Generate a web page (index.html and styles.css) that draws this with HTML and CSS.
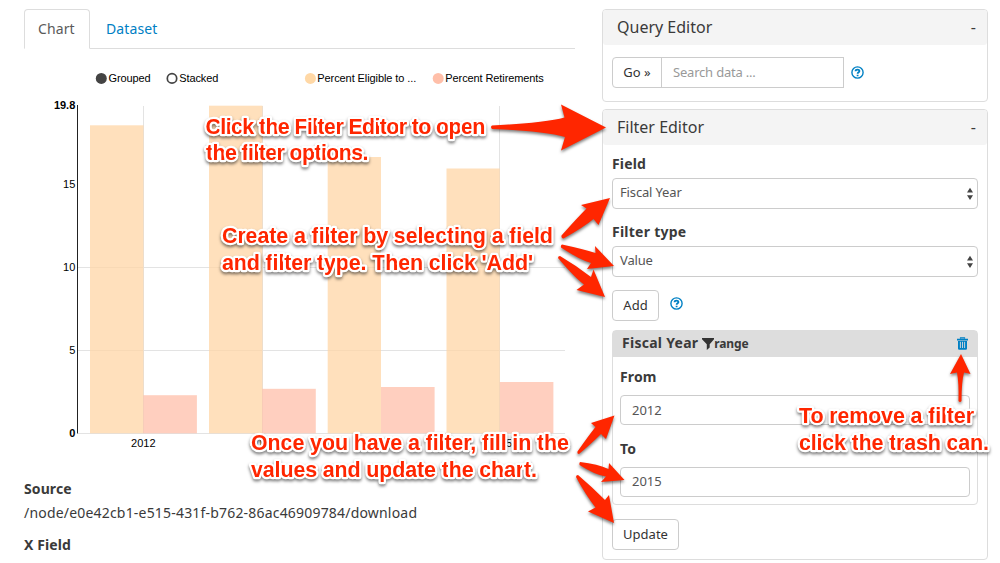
FILE: index.html
```html
<!DOCTYPE html>
<html lang="en">
<head>
<meta charset="utf-8">
<title>Chart preview</title>
<link rel="stylesheet" href="styles.css">
</head>
<body>
<div class="page">
  <main class="preview">
    <nav class="tabs"><a class="tab active">Chart</a><a class="tab">Dataset</a></nav>
    <svg class="chart" width="551" height="410" viewBox="24 49 551 410">
      <circle cx="101.3" cy="78.4" r="5.5" fill="#444"/>
      <text x="108.5" y="82" textLength="42">Grouped</text>
      <circle cx="172" cy="78.4" r="4.7" fill="#fff" stroke="#444" stroke-width="1.7"/>
      <text x="179.3" y="82" textLength="39">Stacked</text>
      <circle cx="310.4" cy="78.4" r="5.5" fill="#ffd8a6"/>
      <text x="317.3" y="82" textLength="99">Percent Eligible to ...</text>
      <circle cx="438.2" cy="78.4" r="5.5" fill="#ffbfa9"/>
      <text x="445.3" y="82" textLength="98.5">Percent Retirements</text>
      <path class="grid" d="M78 267.5H565M78 350.5H565M78 433.5H565M143.5 106V433M262.5 106V433M499.5 106V433"/>
      <g class="eligible">
        <rect x="90" y="125.3" width="53.5" height="308"/>
        <rect x="209" y="105.7" width="53.5" height="327.6"/>
        <rect x="327.7" y="157" width="53.3" height="276.3"/>
        <rect x="446.5" y="168.5" width="53.3" height="264.8"/>
      </g>
      <g class="retired">
        <rect x="143.3" y="395.2" width="53.6" height="38.1"/>
        <rect x="262.2" y="388.8" width="53.6" height="44.5"/>
        <rect x="381" y="387" width="53.6" height="46.3"/>
        <rect x="499.8" y="382" width="53.6" height="51.3"/>
      </g>
      <path d="M77.5 105V433.5" stroke="#222"/>
      <g text-anchor="end">
        <text class="strong" x="75.3" y="109">19.8</text>
        <text x="75.3" y="188">15</text>
        <text x="75.3" y="271">10</text>
        <text x="75.3" y="354">5</text>
        <text class="strong" x="75.3" y="437">0</text>
      </g>
      <g text-anchor="middle">
        <text x="143.3" y="447">2012</text>
        <text x="262.2" y="447">2013</text>
        <text x="381" y="447">2014</text>
        <text x="499.8" y="447">2015</text>
      </g>
    </svg>
    <dl class="meta">
      <dt>Source</dt>
      <dd>/node/e0e42cb1-e515-431f-b762-86ac46909784/download</dd>
      <dt>X Field</dt>
    </dl>
  </main>

  <aside class="sidebar">
    <section class="panel query">
      <h2 class="panel-head">Query Editor<span>-</span></h2>
      <div class="search">
        <button class="btn go">Go »</button><div class="search-input">Search data ...</div>
        <svg class="help" width="13" height="13" viewBox="0 0 13 13"><circle cx="6.5" cy="6.5" r="5.6"/><path d="M4.5 5.2C4.6 3 8.5 3.1 8.4 5.1C8.3 6.3 6.6 6.2 6.6 7.8M6.6 8.7V10.2"/></svg>
      </div>
    </section>
    <section class="panel filter">
      <h2 class="panel-head">Filter Editor<span>-</span></h2>
      <div class="panel-body">
        <div class="label first">Field</div>
        <div class="select">Fiscal Year<svg width="6" height="14" viewBox="0 0 6 14"><path d="M0 5.6L3 .8L6 5.6ZM0 8.2H6L3 13Z"/></svg></div>
        <div class="label second">Filter type</div>
        <div class="select">Value<svg width="6" height="14" viewBox="0 0 6 14"><path d="M0 5.6L3 .8L6 5.6ZM0 8.2H6L3 13Z"/></svg></div>
        <div class="add-row">
          <button class="btn add">Add</button>
          <svg class="help" width="13" height="13" viewBox="0 0 13 13"><circle cx="6.5" cy="6.5" r="5.6"/><path d="M4.5 5.2C4.6 3 8.5 3.1 8.4 5.1C8.3 6.3 6.6 6.2 6.6 7.8M6.6 8.7V10.2"/></svg>
        </div>
        <div class="rule">
          <div class="rule-head">
            <span class="rule-name">Fiscal Year</span>
            <svg class="funnel" width="12" height="12" viewBox="0 0 12 12"><path d="M0 0H12V1.2L7.7 6.2V9.4L4.8 12V6.2L0 1.2Z"/></svg>
            <span class="rule-kind">range</span>
            <svg class="trash" width="11" height="13" viewBox="0 0 11 13"><path d="M3.5 1.8V.8H7.5V1.8" fill="none" stroke="#0080c4" stroke-width="1.2"/><path d="M0 1.8H11V3.4H0ZM1 4H10V11.5Q10 12.7 8.800 12.7H2.2Q1 12.7 1 11.5Z" fill="#0080c4"/><path d="M3.4 4.8V11M5.5 4.8V11M7.6 4.8V11" stroke="#ddd" stroke-width=".9"/></svg>
          </div>
          <div class="rule-body">
            <div class="label">From</div>
            <div class="input">2012</div>
            <div class="label">To</div>
            <div class="input last">2015</div>
          </div>
        </div>
        <button class="btn update">Update</button>
      </div>
    </section>
  </aside>
</div>

<svg class="notes" width="1000" height="563" viewBox="0 0 1000 563">
  <g class="note-text">
    <text x="205.500" y="134" textLength="280">Click the Filter Editor to open</text>
    <text x="206" y="160" textLength="162.5">the filter options.</text>
    <text x="222" y="243" textLength="331">Create a filter by selecting a field</text>
    <text x="222" y="270" textLength="311">and filter type. Then click 'Add'</text>
    <text x="251" y="450" textLength="318">Once you have a filter, fill in the</text>
    <text x="251" y="477" textLength="286">values and update the chart.</text>
    <text x="799" y="423" textLength="175">To remove a filter</text>
    <text x="799" y="450" textLength="190">click the trash can.</text>
  </g>
  <g class="arrows">
    <path d="M492 125.4Q545 123 564.5 117.5L561 104.5L606 127.5L561 150.5L565 137Q545 131 492 129Q490 127 492 125.4Z"/>
    <path d="M561.5 235.5Q578 217 586.5 208.5L581 205L610 198L598.5 225L593.5 219Q584 227 563.5 238.5Q561 238 561.5 235.5Z"/>
    <path d="M562 244.5Q583 249 595.5 253L595 246L614 266L587 269L591 263Q580 260 561 247.5Q560.5 245 562 244.5Z"/>
    <path d="M560 256Q577 266 591 277L593.5 269.5L605 297L576.5 290L584 284.5Q575 278 558 258Q558 256 560 256Z"/>
    <path d="M577.5 451.5Q589 435 595.5 427L591 423L614.5 415.5L606 439L601 434Q592 443 579 454Q577 454 577.5 451.5Z"/>
    <path d="M580 462Q598 464 608.5 469L609 463L624.5 480L601 482L606 476.5Q595 475 579.5 465Q579 463 580 462Z"/>
    <path d="M578 475Q591 486 605 500L609 495L614 523L588 511.5L595.5 507.5Q585 494 576 477Q576 475 578 475Z"/>
    <path d="M961 354L970.5 374L964 372.5Q961.5 382 961.5 401Q960 403 958.5 401Q959 383 957 372.5L950 374Z"/>
  </g>
</svg>
</body>
</html>
```

FILE: styles.css
```css
* { box-sizing: border-box; }
body {
  margin: 0;
  background: #fff;
  color: #3a3a3a;
  font-family: "Noto Sans", "Open Sans", sans-serif;
  font-size: 14px;
  overflow: hidden;
}
.page {
  display: grid;
  grid-template-columns: 551px 386px;
  column-gap: 27px;
  height: 563px;
  padding: 9px 0 0 24px;
  overflow: hidden;
}
.preview { min-width: 0; }
.tabs { display: flex; height: 40px; border-bottom: 1px solid #ddd; }
.tab {
  height: 40px;
  padding: 0 16px;
  line-height: 40px;
  color: #0080c4;
  letter-spacing: .1px;
}
.tab.active {
  width: 66px;
  padding: 0 0 0 13px;
  line-height: 38px;
  background: #fff;
  color: #5a5a5a;
  border: 1px solid #ddd;
  border-bottom-color: #fff;
  border-radius: 4px 4px 0 0;
}
.chart { display: block; font: 11px "Liberation Sans", Arial, sans-serif; fill: #000; }
.chart .strong { font-weight: bold; }
.grid { stroke: #e3e3e3; fill: none; }
.eligible { fill: #ffd6a6; fill-opacity: .75; }
.retired { fill: #ffbfa9; fill-opacity: .75; }
.meta { margin: 19px 0 0; line-height: 22px; }
.meta dt { font-weight: bold; letter-spacing: .1px; }
.meta dd { margin: 2px 0 10px; letter-spacing: .19px; }

.panel { border: 1px solid #ddd; border-radius: 4px; background: #fff; }
.panel-head {
  display: flex;
  justify-content: space-between;
  height: 35px;
  margin: 0;
  padding: 0 11px 0 14px;
  border-radius: 3px;
  background: #f4f4f4;
  font-size: 16px;
  font-weight: normal;
  line-height: 35px;
}
.query { height: 93px; }
.filter { height: 451px; margin-top: 7px; }
.search { display: flex; align-items: center; height: 31px; margin: 12px 9px 0; }
.btn {
  height: 31px;
  padding: 0 0 2px;
  border: 1px solid #ccc;
  border-radius: 4px;
  background: #fff;
  color: #333;
  font: 13px "Noto Sans", "Open Sans", sans-serif;
}
.go { width: 50px; border-radius: 4px 0 0 4px; }
.search-input {
  width: 183px;
  height: 31px;
  margin-left: -1px;
  padding-left: 11px;
  border: 1px solid #ccc;
  color: #999;
  font-size: 13px;
  line-height: 29px;
  letter-spacing: -.2px;
}
.help { margin-left: 7px; fill: none; stroke: #0080c4; stroke-width: 1.4; }
.help path { stroke-width: 1.8; }
.panel-body { padding: 0 9px; }
.label { height: 33px; padding-top: 7px; font-weight: bold; line-height: 22px; letter-spacing: .15px; }
.label.first { padding-top: 8px; }
.label.second { height: 37px; padding-top: 12px; letter-spacing: .25px; }
.select {
  display: flex;
  align-items: center;
  justify-content: space-between;
  height: 31px;
  padding: 0 4px 3px 7px;
  border: 1px solid #ccc;
  border-radius: 4px;
  color: #555;
  font-size: 13px;
  letter-spacing: -.15px;
}
.select svg { fill: #444; margin-top: 3px; }
.add-row { display: flex; align-items: center; margin-top: 13px; }
.add { width: 47px; }
.add-row .help { margin: 0 0 4px 11px; }
.rule { height: 175px; margin-top: 9px; border: 1px solid #ddd; border-radius: 4px; }
.rule-head {
  display: flex;
  align-items: center;
  height: 26px;
  padding: 0 9px;
  background: #ddd;
  font-weight: bold;
}
.rule-name { padding-bottom: 3px; letter-spacing: .27px; }
.rule-kind { padding-bottom: 1px; font-size: 12px; letter-spacing: -.15px; }
.funnel { margin: 0 0 0 4px; fill: #333; }
.trash { margin: 0 0 1px auto; }
.rule-body { padding: 0 7px; }
.rule-body .label { height: 38px; padding-top: 9px; }
.rule-body .label:nth-of-type(3) { height: 42px; padding-top: 13px; }
.input {
  height: 30px;
  padding-left: 11px;
  border: 1px solid #ccc;
  border-radius: 4px;
  color: #555;
  font-size: 13px;
  line-height: 29px;
}
.input.last { line-height: 27px; }
.update { width: 67px; margin-top: 14px; }

/* Callouts drawn over the interface */
.notes { position: absolute; top: 0; left: 0; pointer-events: none; fill: #ff2600; }
.note-text {
  font: bold 21.5px "Liberation Sans", Arial, sans-serif;
  paint-order: stroke;
  stroke: #fff;
  stroke-width: 4.5px;
  stroke-linejoin: round;
  filter: drop-shadow(0 2px 1.5px rgba(0, 0, 0, .5));
}
.arrows { filter: drop-shadow(0 2px 1.5px rgba(0, 0, 0, .5)); }
```
